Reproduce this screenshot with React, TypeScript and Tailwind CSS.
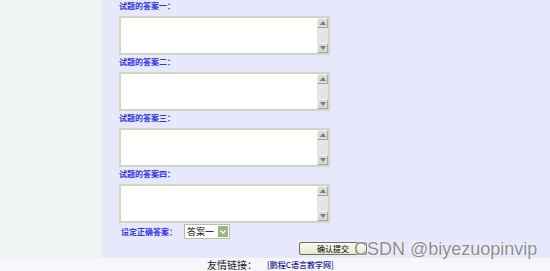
import React from "react";

const cjk = { fontFamily: '"Noto Sans CJK SC", "Liberation Sans", sans-serif' };

function ScrollArea() {
  return (
    <div className="flex h-[39px] w-[211px] border-2 border-[#d0d9bf] bg-white">
      <div className="flex-1" />
      <div className="flex w-[11px] flex-col bg-[#e4e4e4]">
        <div className="flex h-[10px] items-center justify-center border border-t-[#f2f2f2] border-l-[#f2f2f2] border-r-[#a9a9a9] border-b-[#a9a9a9] bg-[#d9d9d9]">
          <svg width="6" height="4" viewBox="0 0 6 4">
            <path d="M0 4 L3 0 L6 4 Z" fill="#7a7a7a" />
          </svg>
        </div>
        <div className="flex-1" />
        <div className="flex h-[10px] items-center justify-center border border-t-[#f2f2f2] border-l-[#f2f2f2] border-r-[#a9a9a9] border-b-[#a9a9a9] bg-[#d9d9d9]">
          <svg width="6" height="4" viewBox="0 0 6 4">
            <path d="M0 0 L3 4 L6 0 Z" fill="#7a7a7a" />
          </svg>
        </div>
      </div>
    </div>
  );
}

function Block({ label, first }: { label: string; first?: boolean }) {
  return (
    <div className={first ? "flex flex-col pt-[1px]" : "flex flex-col pt-[2px]"}>
      <div className="h-[10px] text-[8px] font-bold leading-[10px] text-[#3535e6]" style={cjk}>
        {label}
      </div>
      <div className="mt-[5px]">
        <ScrollArea />
      </div>
    </div>
  );
}

export default function App() {
  return (
    <div className="relative h-[271px] w-[550px] overflow-hidden bg-[#f6f6fb]">
      <div className="flex h-[258px]">
        <div className="w-[102px] bg-[#eef5f3]" />
        <div className="flex flex-1 flex-col bg-[#e8e8fc] pl-[17px]">
          <Block label="试题的答案一：" first />
          <Block label="试题的答案二：" />
          <Block label="试题的答案三：" />
          <Block label="试题的答案四：" />
          <div className="mt-[1px] flex items-center pl-[2px]">
            <span className="w-[63px] text-[8px] font-bold leading-[10px] text-[#3535e6]" style={cjk}>
              设定正确答案：
            </span>
            <div className="flex h-[15px] w-[46px] items-stretch border border-[#b9bfa6] bg-white">
              <span className="flex flex-1 items-center pl-[2px] text-[9px] leading-[10px] text-black" style={cjk}>
                答案一
              </span>
              <span className="m-[1px] flex w-[10px] items-center justify-center bg-[#9db386]">
                <svg width="6" height="4" viewBox="0 0 6 4">
                  <path d="M0.5 0.5 L3 3.2 L5.5 0.5" stroke="#ffffff" strokeWidth="1.3" fill="none" />
                </svg>
              </span>
            </div>
          </div>
          <div className="mt-[3px] flex pl-[180px]">
            <div
              className="flex h-[13px] w-[68px] items-center justify-center rounded-[2px] border border-[#6f6f5e] bg-gradient-to-b from-[#fbfbf2] to-[#e6e6cf] text-[8px] leading-[10px] text-black"
              style={cjk}
            >
              确认提交
            </div>
          </div>
        </div>
      </div>
      <div className="flex h-[13px] items-center pl-[207px]">
        <span className="text-[10px] leading-[13px] text-[#222222]" style={cjk}>
          友情链接：
        </span>
        <span className="ml-[10px] text-[8px] font-medium leading-[13px] text-[#1f1f99]" style={cjk}>
          [鹏程C语言教学网]
        </span>
      </div>
      <div
        className="absolute left-[354px] top-[238px] text-[18px] leading-[22px] text-[#8d8d8d]"
        style={{
          fontFamily: '"Liberation Sans", Arial, sans-serif',
          textShadow: "0 0 2px #ffffff, 0 0 1px #ffffff",
        }}
      >
        CSDN @biyezuopinvip
      </div>
    </div>
  );
}
